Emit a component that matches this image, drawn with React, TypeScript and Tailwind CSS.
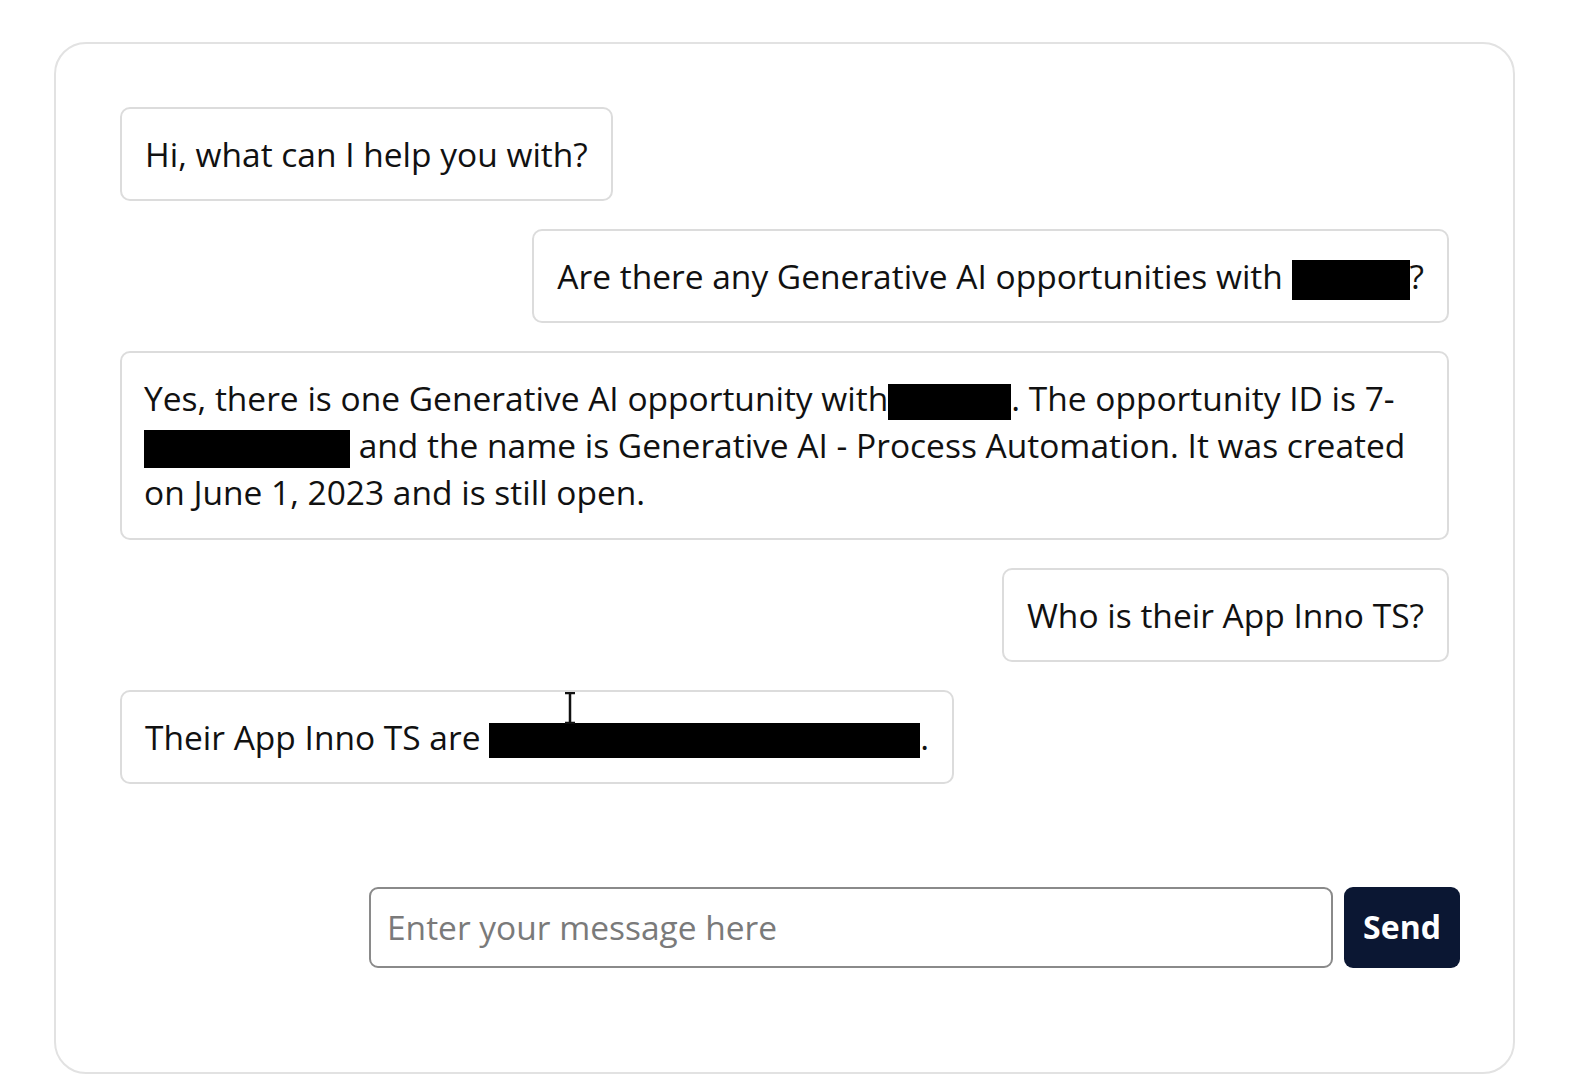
import React from "react";

const Redact = ({ w, h = 38 }: { w: number; h?: number }) => (
  <span className="inline-block bg-black align-middle" style={{ width: w, height: h }} />
);

export default function App() {
  return (
    <div className="min-h-screen bg-white pt-[42px] pl-[54px] pr-[58px] pb-[20px] text-[33.5px] text-[#111]" style={{ fontFamily: '"Open Sans", "Noto Sans", sans-serif' }}>
      <div className="relative rounded-[32px] border-2 border-[#e2e2e2] px-[64px] pt-[63px] pb-[104px]">
        <div className="flex flex-col gap-[28px]">
          <div className="flex justify-start">
            <div className="rounded-[10px] border-2 border-[#dcdcdc] px-[23px] pt-[22px] pb-[21px] leading-[47px]">
              Hi, what can I help you with?
            </div>
          </div>
          <div className="flex justify-end">
            <div className="rounded-[10px] border-2 border-[#dcdcdc] px-[23px] pt-[22px] pb-[21px] leading-[47px] whitespace-nowrap">
              Are there any Generative AI opportunities with <Redact w={118} h={40} />?
            </div>
          </div>
          <div className="rounded-[10px] border-2 border-[#dcdcdc] px-[22px] pt-[22px] pb-[21.5px] leading-[47px]">
            <span className="whitespace-nowrap">Yes, there is one Generative AI opportunity with<Redact w={123} h={36} />. The opportunity ID is 7-</span>
            <br />
            <span className="whitespace-nowrap"><Redact w={206} h={38} /> and the name is Generative AI - Process Automation. It was created</span>
            <br />
            <span className="whitespace-nowrap">on June 1, 2023 and is still open.</span>
          </div>
          <div className="flex justify-end">
            <div className="rounded-[10px] border-2 border-[#dcdcdc] px-[23px] pt-[22px] pb-[21px] leading-[47px]">
              Who is their App Inno TS?
            </div>
          </div>
          <div className="flex justify-start">
            <div className="relative rounded-[10px] border-2 border-[#dcdcdc] px-[23px] pt-[22px] pb-[21px] leading-[47px] whitespace-nowrap">
              Their App Inno TS are <Redact w={431} h={35} />.
              <svg className="absolute left-[441px] top-[0px]" width="14" height="32" viewBox="0 0 14 32">
                <path d="M2 1h10M7 1v30M2 31h10" stroke="#111" strokeWidth="2.5" fill="none" />
              </svg>
            </div>
          </div>
        </div>
        <div className="mt-[103px] flex justify-end gap-[11px] -mr-[11px]">
          <input
            className="h-[81px] w-[964px] rounded-[9px] border-2 border-[#8a8a8a] px-[16px] text-[33.5px] outline-none placeholder:text-[#7a7a7a]"
            placeholder="Enter your message here"
            style={{ fontFamily: '"Open Sans", "Noto Sans", sans-serif' }}
          />
          <button className="h-[81px] w-[116px] rounded-[9px] bg-[#0b1733] text-[32px] font-bold text-white">
            Send
          </button>
        </div>
      </div>
    </div>
  );
}
